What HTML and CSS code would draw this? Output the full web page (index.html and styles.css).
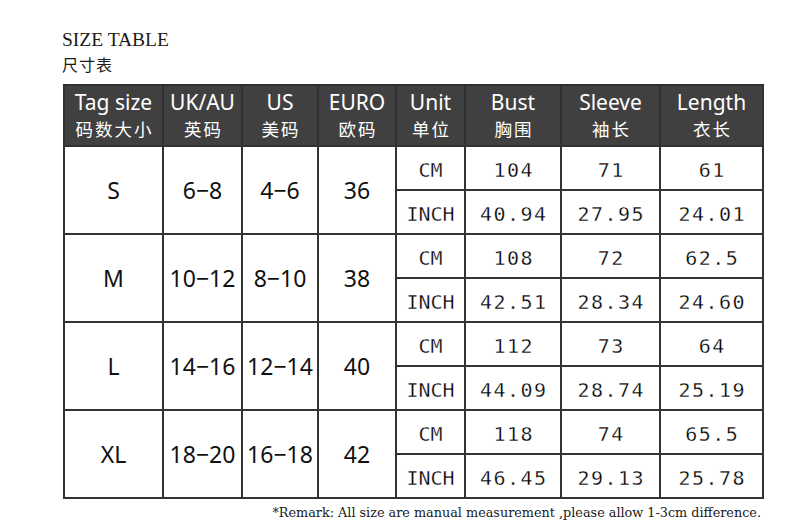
FILE: index.html
```html
<!DOCTYPE html>
<html>
<head>
<meta charset="utf-8">
<link rel="stylesheet" href="styles.css">
</head>
<body>
<div class="page">
  <div class="title">SIZE TABLE</div>
  <div class="subtitle">尺寸表</div>
  <table class="size-table">
    <colgroup>
      <col style="width:99px"><col style="width:79px"><col style="width:76px"><col style="width:78px">
      <col style="width:69px"><col style="width:96px"><col style="width:99px"><col style="width:103px">
    </colgroup>
    <thead>
      <tr>
        <th><span class="en">Tag size</span><span class="cn">码数大小</span></th>
        <th><span class="en">UK/AU</span><span class="cn">英码</span></th>
        <th><span class="en">US</span><span class="cn">美码</span></th>
        <th><span class="en">EURO</span><span class="cn">欧码</span></th>
        <th><span class="en">Unit</span><span class="cn">单位</span></th>
        <th><span class="en">Bust</span><span class="cn">胸围</span></th>
        <th><span class="en">Sleeve</span><span class="cn">袖长</span></th>
        <th><span class="en">Length</span><span class="cn">衣长</span></th>
      </tr>
    </thead>
    <tbody>
      <tr><td rowspan="2" class="sz">S</td><td rowspan="2" class="sz">6−8</td><td rowspan="2" class="sz">4−6</td><td rowspan="2" class="sz">36</td><td class="unit">CM</td><td class="num">104</td><td class="num">71</td><td class="num">61</td></tr>
      <tr><td class="unit">INCH</td><td class="num">40.94</td><td class="num">27.95</td><td class="num">24.01</td></tr>
      <tr><td rowspan="2" class="sz">M</td><td rowspan="2" class="sz">10−12</td><td rowspan="2" class="sz">8−10</td><td rowspan="2" class="sz">38</td><td class="unit">CM</td><td class="num">108</td><td class="num">72</td><td class="num">62.5</td></tr>
      <tr><td class="unit">INCH</td><td class="num">42.51</td><td class="num">28.34</td><td class="num">24.60</td></tr>
      <tr><td rowspan="2" class="sz">L</td><td rowspan="2" class="sz">14−16</td><td rowspan="2" class="sz">12−14</td><td rowspan="2" class="sz">40</td><td class="unit">CM</td><td class="num">112</td><td class="num">73</td><td class="num">64</td></tr>
      <tr><td class="unit">INCH</td><td class="num">44.09</td><td class="num">28.74</td><td class="num">25.19</td></tr>
      <tr><td rowspan="2" class="sz">XL</td><td rowspan="2" class="sz">18−20</td><td rowspan="2" class="sz">16−18</td><td rowspan="2" class="sz">42</td><td class="unit">CM</td><td class="num">118</td><td class="num">74</td><td class="num">65.5</td></tr>
      <tr><td class="unit">INCH</td><td class="num">46.45</td><td class="num">29.13</td><td class="num">25.78</td></tr>
    </tbody>
  </table>
  <div class="remark">*Remark: All size are manual measurement ,please allow 1-3cm difference.</div>
</div>
</body>
</html>
```
FILE: styles.css
```css
html, body {
  margin: 0;
  padding: 0;
  background: #ffffff;
}
.page {
  width: 794px;
  height: 527px;
  padding: 28px 0 0 62px;
  box-sizing: border-box;
  color: #1a1a1a;
}
.title {
  font-family: "Liberation Serif", serif;
  font-size: 19.5px;
  line-height: 24px;
}
.subtitle {
  font-family: "Noto Sans CJK SC", sans-serif;
  font-size: 16px;
  line-height: 24px;
  letter-spacing: 1px;
  margin-bottom: 8px;
}
.size-table {
  border-collapse: collapse;
  table-layout: fixed;
  width: 699px;
  margin-left: 1px;
}
.size-table th {
  background: #404040;
  color: #ffffff;
  height: 59px;
  padding: 0;
  border: 2px solid #303030;
  font-weight: normal;
  vertical-align: middle;
}
.size-table th .en {
  display: block;
  font-family: "Noto Sans", sans-serif;
  font-size: 21px;
  line-height: 28px;
  margin-top: -2px;
}
.size-table th .cn {
  display: block;
  font-family: "Noto Sans CJK SC", sans-serif;
  font-size: 17.5px;
  line-height: 26px;
  letter-spacing: 2px;
  text-indent: 2px;
}
.size-table td {
  border: 2px solid #333333;
  padding: 0;
  height: 42px;
  text-align: center;
  vertical-align: middle;
  color: #111111;
}
.size-table td.sz {
  font-family: "Noto Sans", sans-serif;
  font-size: 23px;
}
.size-table td.unit,
.size-table td.num {
  font-family: "DejaVu Sans Mono", monospace;
  font-size: 20px;
  padding-top: 3px;
  height: 39px;
  color: #000000;
  -webkit-text-stroke: 0.3px #ffffff;
}
.size-table td.num {
  letter-spacing: 1.5px;
  text-indent: 1.5px;
}
.remark {
  width: 699px;
  text-align: right;
  font-family: "DejaVu Serif", serif;
  font-size: 12.8px;
  line-height: 20px;
  margin-top: 4px;
  color: #1a1a1a;
}
```
